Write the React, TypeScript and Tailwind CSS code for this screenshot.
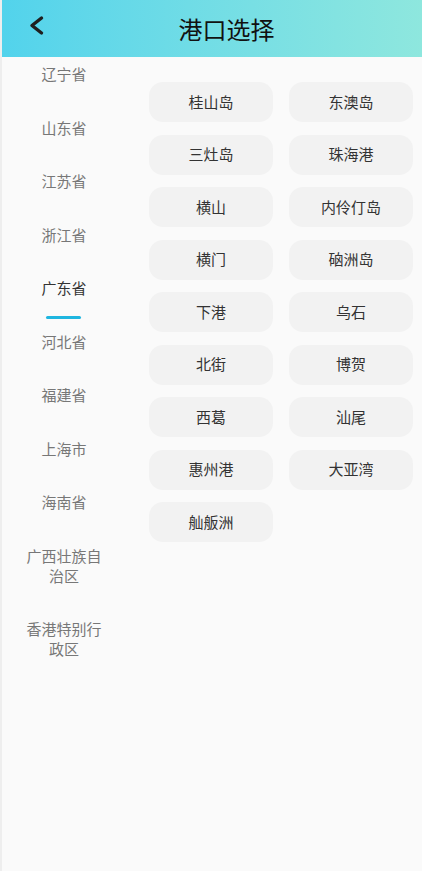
import React from 'react';

const provinces = [
  '辽宁省', '山东省', '江苏省', '浙江省', '广东省', '河北省', '福建省', '上海市', '海南省', '广西壮族自治区', '香港特别行政区',
];

const ports = [
  '桂山岛', '东澳岛', '三灶岛', '珠海港', '横山', '内伶仃岛', '横门', '硇洲岛', '下港', '乌石',
  '北街', '博贺', '西葛', '汕尾', '惠州港', '大亚湾', '舢舨洲',
];

const font = { fontFamily: '"Noto Sans CJK SC", "Noto Sans", sans-serif' };

const App: React.FC = () => {
  const active = '广东省';
  return (
    <div className="w-[422px] h-[871px] bg-[#eeeeee] pl-[2px] overflow-hidden" style={font}>
      <div className="h-full bg-[#fafafa] flex flex-col">
        {/* 顶部栏 */}
        <div className="h-[57px] shrink-0 bg-gradient-to-r from-[#52d3ec] to-[#8ee7de] flex items-center relative">
          <button className="absolute left-[26px] top-[14px] w-[18px] h-[24px]">
            <svg width="18" height="24" viewBox="0 0 18 24" fill="none">
              <path d="M13.5 4 L4 11.5 L13.5 19" stroke="#1f1f1f" strokeWidth="3.4" strokeLinecap="round" strokeLinejoin="round" />
            </svg>
          </button>
          <h1 className="flex-1 text-center text-[24px] text-[#111] pl-[29px] leading-none">港口选择</h1>
        </div>

        <div className="flex flex-1">
          {/* 省份列表 */}
          <div className="w-[124px] shrink-0">
            {provinces.map((p) => (
              <div key={p} className="pt-[7px] pb-[26.5px] px-[24px] relative">
                <p
                  className={`text-[15px] leading-[20px] text-center ${p === active ? 'text-[#333]' : 'text-[#777]'}`}
                >
                  {p.length > 5 ? (
                    <>
                      {p.slice(0, 5)}
                      <br />
                      {p.slice(5)}
                    </>
                  ) : (
                    p
                  )}
                </p>
                {p === active && (
                  <div className="absolute left-[44px] top-[45px] w-[35px] h-[3px] rounded-full bg-[#1fb6e0]"></div>
                )}
              </div>
            ))}
          </div>

          {/* 港口 */}
          <div className="flex-1 pl-[23px] pr-[9px] pt-[25px]">
            <div className="grid grid-cols-2 gap-x-[16px] gap-y-[12.5px]">
              {ports.map((port) => (
                <div
                  key={port}
                  className="h-[40px] rounded-[14px] bg-[#f2f2f2] flex items-center justify-center text-[15px] text-[#333]"
                >
                  {port}
                </div>
              ))}
            </div>
          </div>
        </div>
      </div>
    </div>
  );
};

export default App;
